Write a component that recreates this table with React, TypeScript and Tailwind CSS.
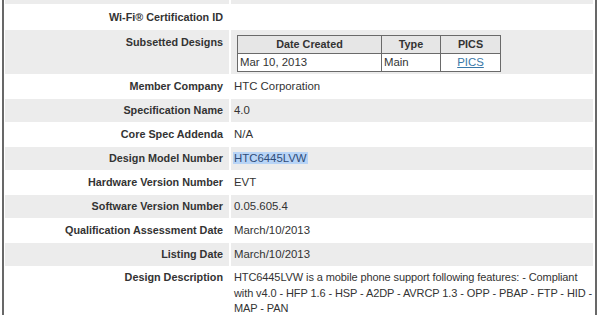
const rows: { label: string; value: string; highlight?: boolean }[] = [
  { label: "Member Company", value: "HTC Corporation" },
  { label: "Specification Name", value: "4.0" },
  { label: "Core Spec Addenda", value: "N/A" },
  { label: "Design Model Number", value: "HTC6445LVW", highlight: true },
  { label: "Hardware Version Number", value: "EVT" },
  { label: "Software Version Number", value: "0.05.605.4" },
  { label: "Qualification Assessment Date", value: "March/10/2013" },
  { label: "Listing Date", value: "March/10/2013" },
];

const font = "font-['Liberation_Sans',Arial,sans-serif]";

function Row({ label, children, gray, className = "" }: { label: string; children: React.ReactNode; gray: boolean; className?: string }) {
  const bg = gray ? "bg-[#ececec]" : "bg-white";
  return (
    <div className={`flex gap-[2px] ${className}`}>
      <div className={`w-[224px] shrink-0 pr-[6px] text-right text-[10.8px] font-bold text-[#333] leading-[15px] ${bg}`}>{label}</div>
      <div className={`flex-1 pl-[3px] text-[11.4px] text-[#333] leading-[15px] ${bg}`}>{children}</div>
    </div>
  );
}

export default function App() {
  return (
    <div className={`w-[600px] h-[315px] overflow-hidden bg-white pl-[2px] ${font}`}>
      <div className="w-[595px] h-full border-x-2 border-[#686868] pl-[1px] pr-[2px] flex flex-col gap-[1px]">
        {/* tail of previous row */}
        <div className="flex gap-[2px] h-[4px] shrink-0">
          <div className="w-[224px] bg-[#ececec]" />
          <div className="flex-1 bg-[#ececec]" />
        </div>

        <Row label="Wi-Fi® Certification ID" gray={false} className="h-[24px] shrink-0 [&>div]:py-[5px]">
          {""}
        </Row>

        <Row label="Subsetted Designs" gray className="h-[44px] shrink-0 [&>div:first-child]:pt-[5px]">
          <div className="pt-[5px] pl-[3px]">
            <table className="border-collapse border border-[#6a6a6a] text-[11.4px] leading-[15px]">
              <thead>
                <tr className="bg-[#e6e6e6]">
                  <th className="w-[144px] border border-[#6a6a6a] py-[1px] font-bold text-[10.8px] text-center">Date Created</th>
                  <th className="w-[59px] border border-[#6a6a6a] py-[1px] font-bold text-[10.8px] text-center">Type</th>
                  <th className="w-[60px] border border-[#6a6a6a] py-[1px] font-bold text-[10.8px] text-center">PICS</th>
                </tr>
              </thead>
              <tbody>
                <tr className="bg-white">
                  <td className="border border-[#6a6a6a] px-[2px] py-[1px]">Mar 10, 2013</td>
                  <td className="border border-[#6a6a6a] px-[2px] py-[1px]">Main</td>
                  <td className="border border-[#6a6a6a] py-[1px] text-center">
                    <a className="text-[#3a78a8] underline">PICS</a>
                  </td>
                </tr>
              </tbody>
            </table>
          </div>
        </Row>

        {rows.map((r, i) => (
          <Row key={r.label} label={r.label} gray={i % 2 === 1} className="h-[23px] shrink-0 [&>div]:py-[4px]">
            {r.highlight ? <span className="bg-[#b8d4f6] text-[#2f4c78] px-[1px] -ml-[1px]">{r.value}</span> : r.value}
          </Row>
        ))}

        <Row label="Design Description" gray={false} className="flex-1 [&>div]:pt-[3px] [&>div]:leading-[15.5px]">
          <span className="text-[11px] tracking-[-0.1px]">
            HTC6445LVW is a mobile phone support following features: - Compliant with v4.0 - HFP 1.6 - HSP - A2DP - AVRCP 1.3 - OPP - PBAP - FTP - HID - MAP - PAN
          </span>
        </Row>
      </div>
    </div>
  );
}
